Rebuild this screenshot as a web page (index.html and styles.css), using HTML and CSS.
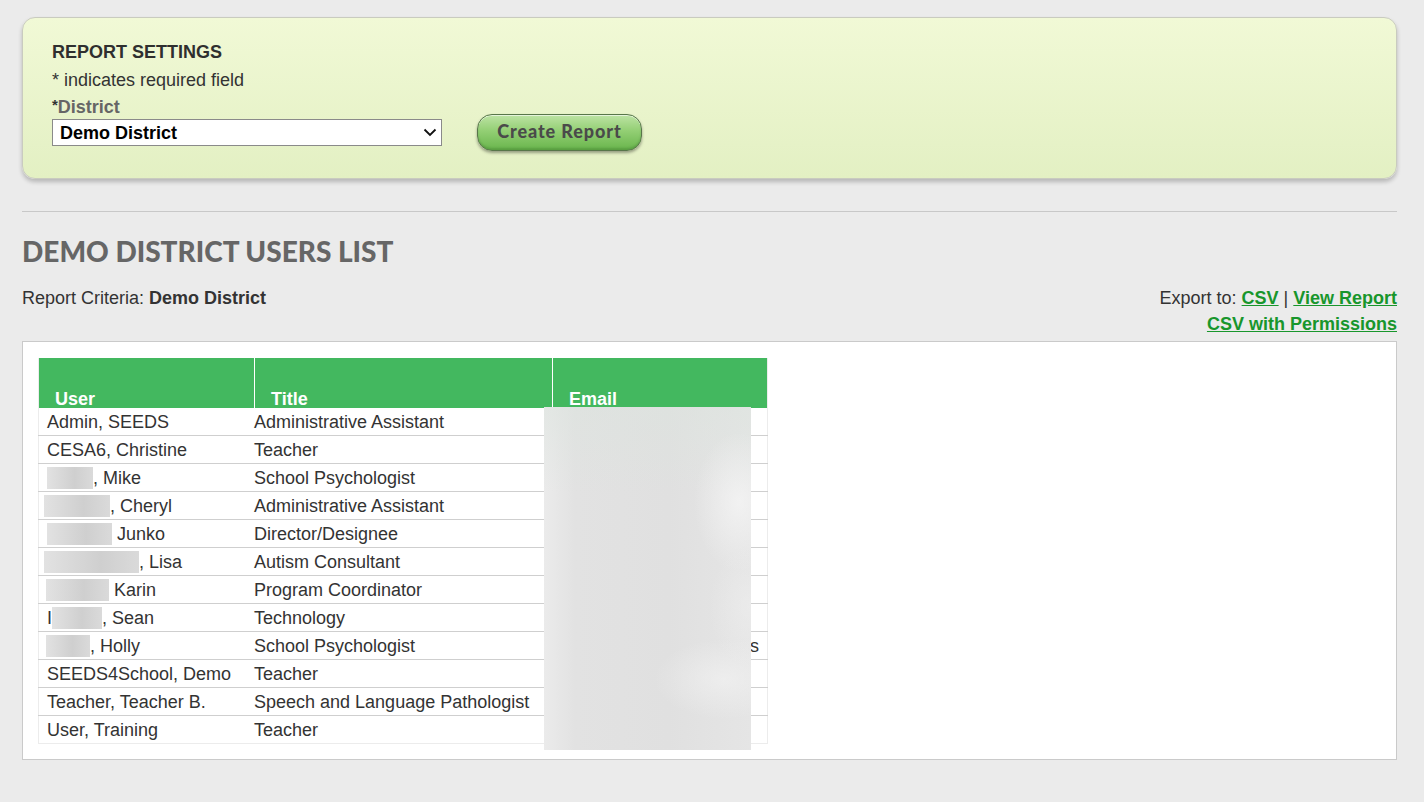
FILE: index.html
```html
<!DOCTYPE html>
<html lang="en">
<head>
  <meta charset="UTF-8">
  <title>Demo District Users List</title>
  <link rel="stylesheet" href="styles.css">
</head>
<body>
  <div class="settings">
    <h2 class="settings-title">REPORT SETTINGS</h2>
    <p class="required-note">* indicates required field</p>
    <label class="field-label" for="district"><span class="star">*</span>District</label>
    <div class="settings-row">
      <div class="select-wrap">
        <select id="district" class="district-select">
          <option>Demo District</option>
        </select>
        <svg class="select-arrow" width="14" height="9" viewBox="0 0 14 9" aria-hidden="true">
          <path d="M1.5 1.5 L7 7 L12.5 1.5" fill="none" stroke="#111" stroke-width="1.8"/>
        </svg>
      </div>
      <button class="create-btn" type="button">Create Report</button>
    </div>
  </div>

  <hr class="divider">

  <h1 class="report-title">DEMO DISTRICT USERS LIST</h1>

  <div class="criteria-row">
    <div class="criteria">Report Criteria: <strong>Demo District</strong></div>
    <div class="export">
      Export to: <a href="#">CSV</a> | <a href="#">View Report</a><br>
      <a href="#">CSV with Permissions</a>
    </div>
  </div>

  <div class="report-box">
    <div class="table-wrap">
      <table class="users">
        <thead>
          <tr>
            <th class="col-user"><div class="th-inner first">User</div></th>
            <th class="col-title"><div class="th-inner">Title</div></th>
            <th class="col-email"><div class="th-inner">Email</div></th>
          </tr>
        </thead>
        <tbody>
          <tr><td>Admin, SEEDS</td><td>Administrative Assistant</td><td></td></tr>
          <tr><td>CESA6, Christine</td><td>Teacher</td><td></td></tr>
          <tr><td><span class="redact r-mike"></span>, Mike</td><td>School Psychologist</td><td></td></tr>
          <tr><td><span class="redact r-cheryl"></span>, Cheryl</td><td>Administrative Assistant</td><td></td></tr>
          <tr><td><span class="redact r-junko"></span> Junko</td><td>Director/Designee</td><td></td></tr>
          <tr><td><span class="redact r-lisa"></span>, Lisa</td><td>Autism Consultant</td><td></td></tr>
          <tr><td><span class="redact r-karin"></span> Karin</td><td>Program Coordinator</td><td></td></tr>
          <tr><td>I<span class="redact r-sean"></span>, Sean</td><td>Technology</td><td></td></tr>
          <tr><td><span class="redact r-holly"></span>, Holly</td><td>School Psychologist</td><td class="email-tail">s</td></tr>
          <tr><td>SEEDS4School, Demo</td><td>Teacher</td><td></td></tr>
          <tr><td>Teacher, Teacher B.</td><td>Speech and Language Pathologist</td><td></td></tr>
          <tr><td>User, Training</td><td>Teacher</td><td></td></tr>
        </tbody>
      </table>
      <div class="email-blur"></div>
    </div>
  </div>
</body>
</html>
```

FILE: styles.css
```css
:root {
  --page-bg: #ebebeb;
  --text-color: #333;
  --header-green: #43b85f;
  --link-green: #18962c;
  --row-line: #cfcfcf;
}

body {
  font-family: "Liberation Sans", Arial, sans-serif;
  font-size: 18px;
  color: var(--text-color);
  margin: 0;
  padding: 17px 27px 40px 22px;
  background-color: var(--page-bg);
}

/* report settings panel */
.settings {
  background: linear-gradient(to bottom, #f1f9d6, #e3f0c3);
  border: 1px solid #c9cbbf;
  border-radius: 13px;
  box-shadow: 0 3px 4px rgba(0, 0, 0, 0.22);
  padding: 24px 29px 27px;
}

.settings-title {
  margin: 0;
  font-size: 18px;
  line-height: 20px;
  font-weight: bold;
  color: #2f2f2f;
}

.required-note {
  margin: 8px 0 0;
  line-height: 20px;
}

.field-label {
  display: block;
  margin-top: 5px;
  line-height: 20px;
  font-weight: bold;
  color: #666;
}

.field-label .star {
  color: #333;
  font-weight: bold;
  vertical-align: 3px;
  font-size: 15px;
}

.settings-row {
  display: flex;
  align-items: center;
  gap: 35px;
  margin-top: -3px;
  height: 37px;
}

.select-wrap {
  position: relative;
}

.district-select {
  display: block;
  width: 390px;
  height: 27px;
  font-family: "Liberation Sans", Arial, sans-serif;
  font-size: 18px;
  font-weight: bold;
  color: #000;
  background: #fff;
  border: 1px solid #8a8a8a;
  border-radius: 0;
  padding: 0 30px 0 7px;
  appearance: none;
  -webkit-appearance: none;
}

.select-arrow {
  position: absolute;
  right: 5px;
  top: 9px;
  pointer-events: none;
}

.create-btn {
  width: 165px;
  height: 37px;
  border-radius: 15px;
  border: 1px solid #58764a;
  background: linear-gradient(to bottom, #bde3a4 0%, #93cf74 45%, #69b54c 100%);
  box-shadow: inset 0 1px 0 rgba(255, 255, 255, 0.6), inset 0 -2px 2px rgba(40, 90, 30, 0.25), 0 2px 3px rgba(0, 0, 0, 0.35);
  font-family: Lato, "Open Sans", sans-serif;
  font-weight: 900;
  font-size: 18px;
  letter-spacing: 0.9px;
  color: #4a4a4a;
  cursor: pointer;
  padding: 0 0 3px;
}

.divider {
  border: 0;
  border-top: 1px solid #c8c8c8;
  margin: 32px 0 0;
}

.report-title {
  margin: 24px 0 0;
  font-family: Lato, "Open Sans", sans-serif;
  font-weight: 900;
  font-size: 28px;
  line-height: 30px;
  color: #666;
}

.criteria-row {
  display: flex;
  justify-content: space-between;
  align-items: flex-start;
  margin-top: 19px;
  line-height: 26px;
}

.export {
  text-align: right;
}

.export a {
  color: var(--link-green);
  font-weight: bold;
  text-decoration: underline;
}

/* users table */
.report-box {
  margin-top: 4px;
  background: #fff;
  border: 1px solid #cacaca;
  padding: 16px 15px 15px 15px;
}

.table-wrap {
  position: relative;
  width: 730px;
}

.users {
  border-collapse: collapse;
  width: 730px;
  border-left: 1px solid #ececec;
  border-right: 1px solid #ececec;
  font-size: 18px;
}

.users th {
  background: var(--header-green);
  color: #fff;
  text-align: left;
  vertical-align: bottom;
  height: 50px;
  padding: 0;
  font-size: 18px;
}

.col-user { width: 208px; }
.col-title { width: 298px; }

.th-inner {
  margin-left: 7px;
  border-left: 1px solid #fff;
  padding: 0 0 0 16px;
  height: 50px;
  line-height: 18px;
  box-sizing: border-box;
  display: flex;
  align-items: flex-end;
}

.th-inner.first {
  margin-left: 0;
  border-left: 0;
}

.users td {
  height: 26px;
  padding: 1px 8px 0;
  border-bottom: 1px solid var(--row-line);
  white-space: nowrap;
  line-height: 26px;
}

.users td:nth-child(2) {
  padding-left: 7px;
}

.users tr:last-child td {
  border-bottom-color: #ececec;
}

.email-tail {
  text-align: right;
}

.redact {
  display: inline-block;
  height: 22px;
  vertical-align: -5px;
  background: linear-gradient(to right, #e2e2e2, #cfcfcf 60%, #dadada);
}

.r-mike { width: 46px; }
.r-cheryl { width: 66px; margin-left: -3px; }
.r-junko { width: 65px; }
.r-lisa { width: 95px; margin-left: -3px; }
.r-karin { width: 63px; margin-left: -1px; }
.r-sean { width: 50px; }
.r-holly { width: 44px; margin-left: -1px; }

/* blurred email column */
.email-blur {
  position: absolute;
  left: 506px;
  top: 49px;
  width: 207px;
  height: 343px;
  background:
    radial-gradient(ellipse 45px 70px at 195px 95px, rgba(246, 246, 246, 0.75), rgba(246, 246, 246, 0)),
    radial-gradient(ellipse 70px 40px at 180px 272px, rgba(244, 244, 244, 0.6), rgba(244, 244, 244, 0)),
    radial-gradient(ellipse 40px 60px at 205px 200px, rgba(240, 240, 240, 0.5), rgba(240, 240, 240, 0)),
    linear-gradient(to bottom, rgba(220, 228, 222, 0.5), rgba(226, 226, 226, 0) 25%),
    linear-gradient(to right, #ebebeb 0%, #e2e2e2 15%, #e0e0e0 60%, #e5e5e5 100%);
}
```
